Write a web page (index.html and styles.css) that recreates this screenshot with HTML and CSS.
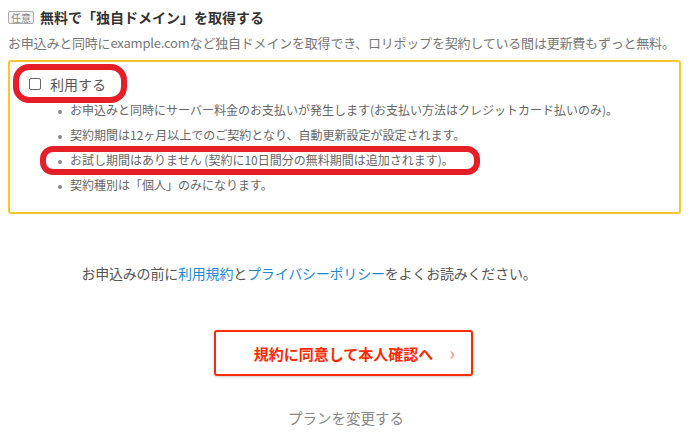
FILE: index.html
```html
<!DOCTYPE html>
<html lang="ja">
<head>
    <meta charset="UTF-8">
    <title>独自ドメイン</title>
    <link rel="stylesheet" href="styles.css">
</head>
<body>
    <div class="option-head">
        <span class="badge">任意</span>
        <h2>無料で「独自ドメイン」を取得する</h2>
    </div>
    <p class="lead">お申込みと同時にexample.comなど独自ドメインを取得でき、ロリポップを契約している間は更新費もずっと無料。</p>

    <div class="option-box">
        <label class="use-row">
            <input type="checkbox">
            <span>利用する</span>
            <span class="mark mark-check"></span>
        </label>
        <ul class="notes">
            <li>お申込みと同時にサーバー料金のお支払いが発生します(お支払い方法はクレジットカード払いのみ)。</li>
            <li>契約期間は12ヶ月以上でのご契約となり、自動更新設定が設定されます。</li>
            <li>お試し期間はありません (契約に10日間分の無料期間は追加されます)。<span class="mark mark-note"></span></li>
            <li>契約種別は「個人」のみになります。</li>
        </ul>
    </div>

    <p class="agree">お申込みの前に<a href="#">利用規約</a>と<a href="#">プライバシーポリシー</a>をよくお読みください。</p>

    <div class="actions">
        <button class="submit">規約に同意して本人確認へ<span class="arrow">›</span></button>
    </div>
    <p class="change"><a href="#">プランを変更する</a></p>
</body>
</html>
```

FILE: styles.css
```css
body {
    margin: 0;
    padding: 7px 8px 0;
    font-family: "Noto Sans CJK JP", "Liberation Sans", sans-serif;
    color: #555;
    background: #fff;
}
.option-head {
    display: flex;
    align-items: center;
    height: 20px;
}
.badge {
    font-size: 10px;
    line-height: 11px;
    color: #888;
    background: #f4f4f4;
    border: 1px solid #aaa;
    border-radius: 2px;
    padding: 0 2px;
    margin-right: 6px;
}
.option-head h2 {
    margin: 0;
    font-size: 14px;
    line-height: 20px;
    font-weight: bold;
    color: #333;
}
.lead {
    margin: 6px 0 0;
    font-size: 13px;
    line-height: 20px;
    color: #777;
    letter-spacing: -0.2px;
    white-space: nowrap;
}
.option-box {
    margin-top: 7px;
    width: 673px;
    box-sizing: border-box;
    border: 2px solid #f8c630;
    border-radius: 3px;
    padding: 10px 0 15px 19px;
}
.use-row {
    position: relative;
    display: flex;
    align-items: center;
    height: 24px;
    font-size: 14px;
    color: #555;
}
.use-row input {
    appearance: none;
    width: 12px;
    height: 12px;
    margin: 0 9px 0 0;
    border: 1px solid #666;
    border-radius: 2px;
    background: #fff;
}
.notes {
    list-style: none;
    margin: 1px 0 0;
    padding-left: 29px;
}
.notes li {
    position: relative;
    font-size: 12px;
    line-height: 25px;
    color: #666;
    white-space: nowrap;
}
.notes li::before {
    content: "";
    display: inline-block;
    width: 4px;
    height: 4px;
    border-radius: 50%;
    background: #888;
    margin-right: 8px;
    vertical-align: middle;
}
.mark {
    position: absolute;
    box-sizing: border-box;
    border: 6px solid #e61e28;
    pointer-events: none;
}
.mark-check {
    left: -16px;
    top: -8px;
    width: 114px;
    height: 39px;
    border-radius: 16px;
}
.mark-note {
    left: -18px;
    top: -1px;
    width: 440px;
    height: 29px;
    border-radius: 13px;
}
.agree {
    margin: 49px 74px 0 0;
    font-size: 14px;
    line-height: 20px;
    text-align: center;
    color: #555;
    letter-spacing: -0.2px;
}
.agree a {
    color: #1a8ae0;
    text-decoration: none;
}
.actions {
    display: flex;
    justify-content: center;
    margin-top: 47px;
    padding-right: 5px;
}
.submit {
    position: relative;
    width: 259px;
    height: 46px;
    background: #fff;
    border: 2px solid #ff2a00;
    border-radius: 3px;
    box-shadow: 0 1px 3px rgba(0,0,0,0.2);
    color: #ff2a00;
    font-family: inherit;
    font-size: 15px;
    font-weight: bold;
    cursor: pointer;
}
.arrow {
    position: absolute;
    right: 16px;
    top: 10px;
    font-size: 18px;
    line-height: 20px;
    color: #f99;
}
.change {
    margin: 32px 0 0;
    text-align: center;
    font-size: 14.5px;
    line-height: 20px;
}
.change a {
    color: #888;
    text-decoration: none;
}
```
